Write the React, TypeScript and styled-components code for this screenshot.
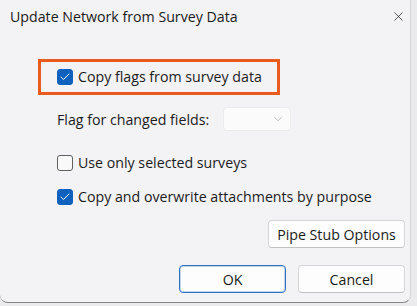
import { createGlobalStyle } from "styled-components";
import styled from "styled-components";
import { X, ChevronDown, Check } from "lucide-react";

const GlobalStyle = createGlobalStyle`
  html, body {
    margin: 0;
    padding: 0;
    background: #ebebed;
  }
  body {
    font-family: "Open Sans", "Noto Sans", sans-serif;
    font-size: 14.2px;
    color: #1b1b1b;
  }
`;

const Window = styled.div`
  width: 411px;
  height: 303px;
  box-sizing: border-box;
  background: #f3f2f5;
  border-right: 1px solid rgba(0, 0, 0, 0.12);
  border-bottom: 1px solid rgba(0, 0, 0, 0.45);
  border-bottom-left-radius: 8px;
  border-bottom-right-radius: 8px;
  display: flex;
  flex-direction: column;
`;

const TitleBar = styled.div`
  height: 32px;
  display: flex;
  align-items: center;
  justify-content: space-between;
  padding-left: 10px;
  font-size: 14.2px;
  color: #1a1a1a;
`;

const CloseButton = styled.div`
  width: 24px;
  height: 32px;
  display: flex;
  align-items: center;
  justify-content: center;
  color: #2b2b2b;
`;

const Body = styled.div`
  flex: 1;
  display: flex;
  flex-direction: column;
  padding: 27px 5px 0 38px;
`;

const Highlight = styled.div`
  width: 242px;
  height: 36px;
  box-sizing: border-box;
  border: 3px solid #ea5b1f;
  display: flex;
  align-items: center;
  gap: 5px;
  padding-left: 16px;
`;

const Row = styled.div<{ $top: number }>`
  display: flex;
  align-items: center;
  gap: 5px;
  margin-top: ${(p) => p.$top}px;
  margin-left: 19px;
  height: 20px;
`;

const Box = styled.span<{ $checked?: boolean }>`
  width: 16px;
  height: 16px;
  box-sizing: border-box;
  border-radius: 3px;
  display: inline-flex;
  align-items: center;
  justify-content: center;
  flex-shrink: 0;
  background: ${(p) => (p.$checked ? "#1060bd" : "#f9f9fa")};
  border: 1px solid ${(p) => (p.$checked ? "#1060bd" : "#606060")};
  color: #fff;
`;

const Label = styled.span`
  white-space: nowrap;
  line-height: 20px;
`;

const FieldRow = styled.div`
  display: flex;
  align-items: center;
  margin-top: 12px;
  margin-left: 19px;
  height: 24px;
`;

const FieldLabel = styled.span`
  width: 166px;
  white-space: nowrap;
`;

const Select = styled.div`
  width: 68px;
  height: 24px;
  box-sizing: border-box;
  background: #fbfbfc;
  border: 1px solid #ececee;
  border-radius: 4px;
  display: flex;
  align-items: center;
  justify-content: flex-end;
  padding-right: 5px;
  color: #b0b0b4;
`;

const ButtonRow = styled.div<{ $top: number }>`
  display: flex;
  justify-content: flex-end;
  gap: 12px;
  margin-top: ${(p) => p.$top}px;
`;

const Button = styled.div<{ $w: number; $primary?: boolean }>`
  width: ${(p) => p.$w}px;
  height: 28px;
  box-sizing: border-box;
  background: #fdfdfd;
  border: 1px solid ${(p) => (p.$primary ? "#2f6fbd" : "#d6d6d8")};
  border-bottom-color: ${(p) => (p.$primary ? "#2f6fbd" : "#c2c2c4")};
  box-shadow: ${(p) =>
    p.$primary ? "inset 0 0 0 1px rgba(80, 140, 210, 0.35)" : "none"};
  border-radius: 4px;
  display: flex;
  align-items: center;
  justify-content: center;
  white-space: nowrap;
`;

const CheckRow = ({
  checked,
  label,
  top,
}: {
  checked?: boolean;
  label: string;
  top: number;
}) => (
  <Row $top={top}>
    <Box $checked={checked}>
      {checked && <Check size={12} strokeWidth={2} />}
    </Box>
    <Label>{label}</Label>
  </Row>
);

const App = () => {
  return (
    <>
      <GlobalStyle />
      <Window>
        <TitleBar>
          <span>Update Network from Survey Data</span>
          <CloseButton>
            <X size={15} strokeWidth={1.3} />
          </CloseButton>
        </TitleBar>
        <Body>
          <Highlight>
            <Box $checked>
              <Check size={12} strokeWidth={2} />
            </Box>
            <Label>Copy flags from survey data</Label>
          </Highlight>
          <FieldRow>
            <FieldLabel>Flag for changed fields:</FieldLabel>
            <Select>
              <ChevronDown size={14} strokeWidth={1.4} />
            </Select>
          </FieldRow>
          <CheckRow label="Use only selected surveys" top={22} />
          <CheckRow checked label="Copy and overwrite attachments by purpose" top={14} />
          <ButtonRow $top={13}>
            <Button $w={137}>Pipe Stub Options</Button>
          </ButtonRow>
          <ButtonRow $top={17}>
            <Button $w={107} $primary>
              OK
            </Button>
            <Button $w={107}>Cancel</Button>
          </ButtonRow>
        </Body>
      </Window>
    </>
  );
};

export default App;
